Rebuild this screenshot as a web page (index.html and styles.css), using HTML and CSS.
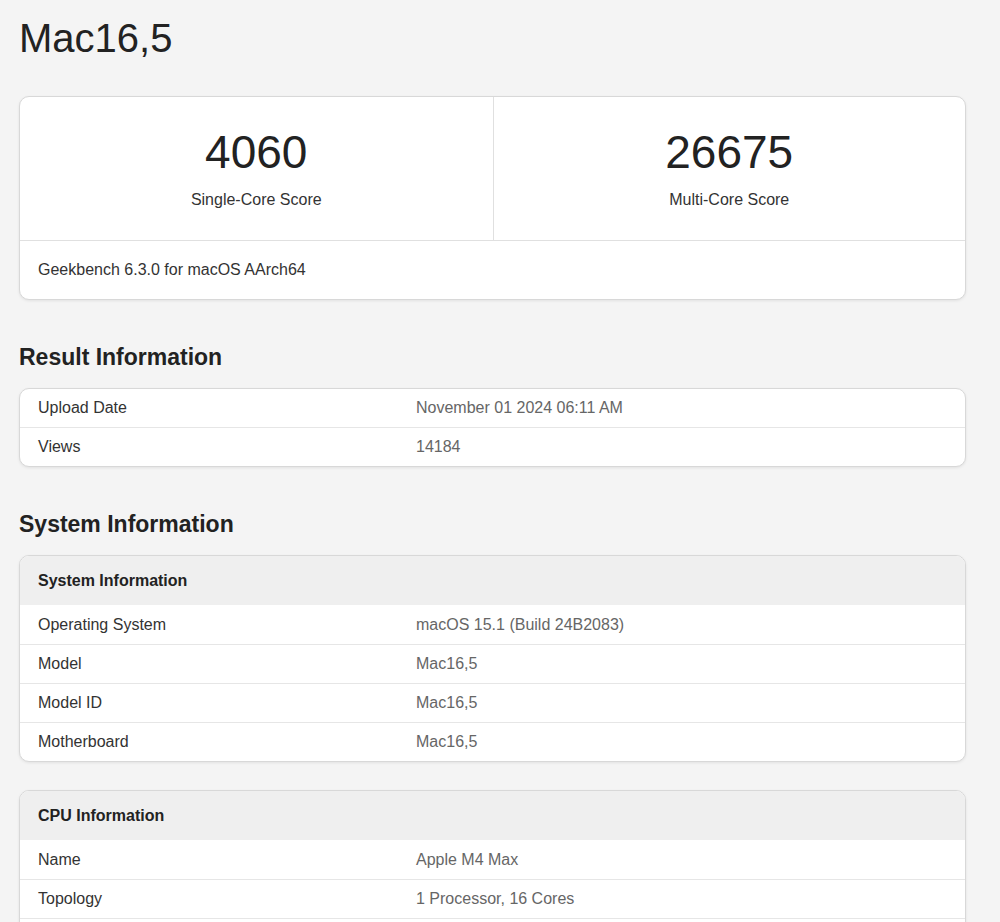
FILE: index.html
```html
<!DOCTYPE html>
<html lang="en">
<head>
<meta charset="utf-8">
<title>Mac16,5 - Geekbench</title>
<link rel="stylesheet" href="styles.css">
</head>
<body>
<main class="page">
  <h1 class="title">Mac16,5</h1>

  <section class="card score-card">
    <div class="scores">
      <div class="score">
        <div class="score-value">4060</div>
        <div class="score-label">Single-Core Score</div>
      </div>
      <div class="score">
        <div class="score-value">26675</div>
        <div class="score-label">Multi-Core Score</div>
      </div>
    </div>
    <div class="score-foot">Geekbench 6.3.0 for macOS AArch64</div>
  </section>

  <h2 class="section-title">Result Information</h2>
  <section class="card table">
    <div class="row"><div class="name">Upload Date</div><div class="value">November 01 2024 06:11 AM</div></div>
    <div class="row"><div class="name">Views</div><div class="value">14184</div></div>
  </section>

  <h2 class="section-title">System Information</h2>
  <section class="card table">
    <div class="head">System Information</div>
    <div class="row"><div class="name">Operating System</div><div class="value">macOS 15.1 (Build 24B2083)</div></div>
    <div class="row"><div class="name">Model</div><div class="value">Mac16,5</div></div>
    <div class="row"><div class="name">Model ID</div><div class="value">Mac16,5</div></div>
    <div class="row"><div class="name">Motherboard</div><div class="value">Mac16,5</div></div>
  </section>

  <section class="card table gap-top">
    <div class="head">CPU Information</div>
    <div class="row"><div class="name">Name</div><div class="value">Apple M4 Max</div></div>
    <div class="row"><div class="name">Topology</div><div class="value">1 Processor, 16 Cores</div></div>
    <div class="row row-more"></div>
  </section>
</main>
</body>
</html>
```

FILE: styles.css
```css
html {
  scrollbar-width: none;
}
html::-webkit-scrollbar {
  display: none;
}
body {
  margin: 0;
  background: #f4f4f4;
  font-family: "Liberation Sans", Arial, sans-serif;
  color: #333;
}
.page {
  width: 947px;
  margin-left: 19px;
  padding-bottom: 40px;
}
.title {
  margin: 14px 0 0;
  font-size: 40px;
  line-height: 48px;
  font-weight: normal;
  color: #222;
}
.card {
  background: #fff;
  border: 1px solid #d8d8d8;
  border-radius: 10px;
  box-shadow: 0 1px 3px rgba(0, 0, 0, 0.08);
  overflow: hidden;
}
.score-card {
  margin-top: 34px;
}
.scores {
  display: grid;
  grid-template-columns: 1fr 1fr;
  border-bottom: 1px solid #e0e0e0;
}
.score {
  padding: 32px 0 30px;
  text-align: center;
}
.score + .score {
  border-left: 1px solid #e0e0e0;
}
.score-value {
  font-size: 46px;
  line-height: 46px;
  color: #222;
}
.score-label {
  margin-top: 15px;
  font-size: 16px;
  line-height: 20px;
  color: #333;
}
.score-foot {
  padding: 19px 18px 19px;
  font-size: 16px;
  line-height: 20px;
  color: #333;
}
.section-title {
  margin: 43px 0 17px;
  font-size: 23px;
  line-height: 28px;
  font-weight: bold;
  color: #222;
}
.table {
  font-size: 16px;
  line-height: 20px;
}
.head {
  padding: 15px 18px 14px;
  background: #efefef;
  font-weight: bold;
  color: #222;
}
.row {
  display: grid;
  grid-template-columns: 40% 1fr;
  padding: 9px 0;
}
.row + .row {
  border-top: 1px solid #e6e6e6;
}
.head + .row {
  padding-top: 10px;
}
.row-more {
  height: 20px;
}
.name {
  padding-left: 18px;
  color: #333;
}
.value {
  padding-left: 18px;
  color: #666;
}
.gap-top {
  margin-top: 28px;
}
```
